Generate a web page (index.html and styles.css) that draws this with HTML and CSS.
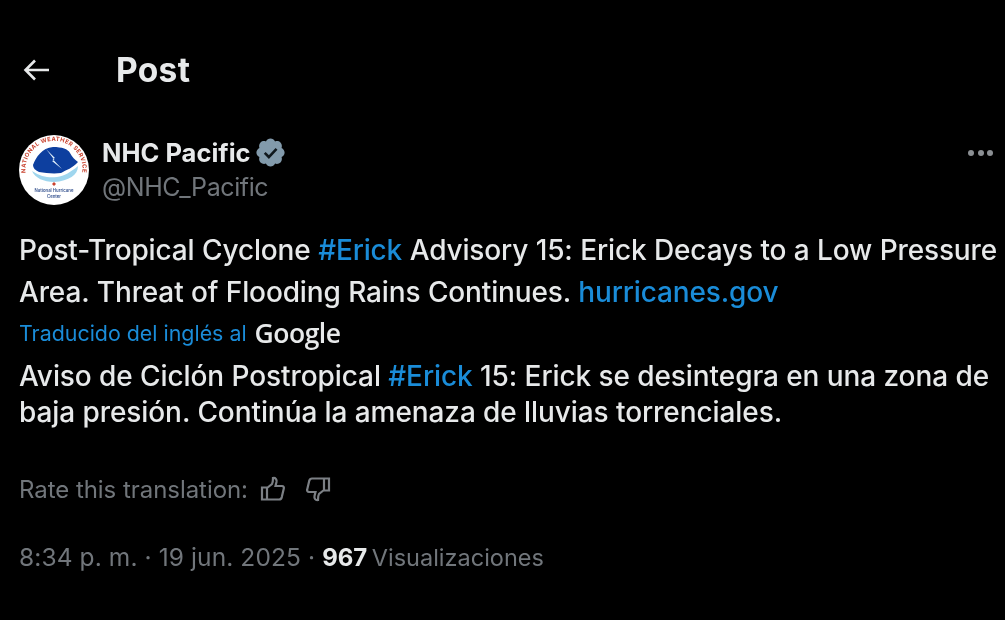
FILE: index.html
```html
<!DOCTYPE html>
<html lang="es">
<head>
<meta charset="utf-8">
<title>Post</title>
<link rel="stylesheet" href="styles.css">
</head>
<body>
<main class="page">
  <header class="topbar">
    <svg class="back" viewBox="0 0 28 24" aria-hidden="true"><path d="M3.500 12H27M13 2.500L3.500 12l9.500 9.500" fill="none" stroke="#e7e9ea" stroke-width="2.600"/></svg>
    <h1 class="title">Post</h1>
  </header>
  <section class="author">
    <svg class="avatar" viewBox="0 0 70 70" role="img" aria-label="NWS">
      <circle cx="35" cy="35" r="35" fill="#fff"/>
      <defs><path id="ring" d="M9 46A28.500 28.500 0 1 1 61 46"/></defs>
      <text class="ring-text"><textPath href="#ring" startOffset="50%" text-anchor="middle">NATIONAL WEATHER SERVICE</textPath></text>
      <path d="M13 36C22 42 30 43 38 42C45 41 52 37 59 31C59 40 50 46 35 47C25 47 16 43 13 36Z" fill="#9fd6ee"/>
      <path d="M14 30C17 22 23 13 34 12C43 12 49 14 51 18C53 22 56 25 59 27C54 33 47 35 42 38C34 39 27 38 20 37C16 35 14 33 14 30Z" fill="#0d3f9f"/>
      <path d="M27 14L36 23L33.500 24L43 34L33 26L35.500 25Z" fill="#e6f4fc"/>
      <path d="M33 49l2-2 2 2-2 2z" fill="#c9432f"/>
      <text class="center-text" x="35" y="57" text-anchor="middle">National Hurricane</text>
      <text class="center-text" x="35" y="63" text-anchor="middle">Center</text>
    </svg>
    <div class="names">
      <div class="display">
        <span class="display-name">NHC Pacific</span>
        <svg class="badge" viewBox="0 0 24 24" aria-hidden="true"><path d="M22.250 12c0-1.430-.880-2.670-2.190-3.340.460-1.390.200-2.900-.810-3.910s-2.520-1.270-3.910-.810c-.660-1.310-1.910-2.190-3.340-2.190s-2.670.880-3.330 2.190c-1.400-.460-2.910-.200-3.920.810s-1.260 2.520-.800 3.910c-1.310.670-2.200 1.910-2.200 3.340s.890 2.670 2.200 3.340c-.460 1.390-.210 2.900.800 3.910s2.520 1.260 3.910.810c.670 1.310 1.910 2.190 3.340 2.190s2.680-.880 3.340-2.190c1.390.450 2.900.200 3.910-.810s1.270-2.520.810-3.910c1.310-.670 2.190-1.910 2.190-3.340z" fill="#829aab"/><path d="M7.800 12.300l3 3 5.600-6" fill="none" stroke="#10181d" stroke-width="1.900"/></svg>
      </div>
      <div class="handle">@NHC_Pacific</div>
    </div>
    <div class="more" aria-label="Más"><span></span><span></span><span></span></div>
  </section>
  <p class="tweet">Post-Tropical Cyclone <a>#Erick</a> Advisory 15: Erick Decays to a Low Pressure Area. Threat of Flooding Rains Continues. <a>hurricanes.gov</a></p>
  <div class="translated-by"><span>Traducido del inglés al</span><span class="google">Google</span></div>
  <p class="translation">Aviso de Ciclón Postropical <a>#Erick</a> 15: Erick se desintegra en una zona de baja presión. Continúa la amenaza de lluvias torrenciales.</p>
  <div class="rate">
    <span>Rate this translation:</span>
    <svg class="thumb" viewBox="0 0 26 26" aria-hidden="true"><path d="M2 11.500h5v12H2zM7 12l5-4c1-1.500 1-3.500 1-6 2.500-.500 4 1.500 3.500 4L15.500 10H22c1.500 0 2.200 1.200 1.800 2.600l-2 8.500c-.400 1.500-1.300 2.400-2.800 2.400H7" fill="none" stroke="#7c8085" stroke-width="2.200"/></svg>
    <svg class="thumb down" viewBox="0 0 26 26" aria-hidden="true"><path d="M2 11.500h5v12H2zM7 12l5-4c1-1.500 1-3.500 1-6 2.500-.500 4 1.500 3.500 4L15.500 10H22c1.500 0 2.200 1.200 1.800 2.600l-2 8.500c-.400 1.500-1.300 2.400-2.800 2.400H7" fill="none" stroke="#7c8085" stroke-width="2.200"/></svg>
  </div>
  <div class="meta"><span class="date">8:34 p. m. · 19 jun. 2025 · </span><strong>967</strong> <span class="views">Visualizaciones</span></div>
</main>
</body>
</html>
```
FILE: styles.css
```css
* { box-sizing: border-box; }
html, body { margin: 0; height: 100%; background: #000; }
body { overflow: hidden; }
.page {
  height: 620px;
  padding: 0 3px 0 19px;
  font-family: Inter, "Liberation Sans", sans-serif;
  color: #e7e9ea;
  filter: blur(0.5px);
}
.topbar { display: flex; align-items: center; height: 70px; padding-top: 70px; gap: 66px; padding-left: 3px; }
.back { width: 28px; height: 24px; flex: none; }
.title { margin: 0; font-size: 33.500px; font-weight: 700; letter-spacing: 0.3px; }
.author { display: flex; align-items: flex-start; margin-top: 65px; height: 70px; }
.avatar { width: 70px; height: 70px; flex: none; }
.ring-text { font-size: 5.800px; font-weight: 700; fill: #c9432f; letter-spacing: .4px; }
.center-text { font-size: 4.300px; font-weight: 600; fill: #36538f; }
.names { margin-left: 13px; flex: 1; }
.display { display: flex; align-items: center; gap: 3px; height: 35px; }
.display-name { font-size: 25.500px; font-weight: 700; }
.badge { width: 33px; height: 33px; flex: none; }
.handle { color: #71767b; font-size: 25px; line-height: 35px; letter-spacing: -0.4px; }
.more { display: flex; gap: 3.500px; padding-top: 15px; margin-right: 9px; }
.more span { width: 6px; height: 6px; border-radius: 50%; background: #8b8f93; }
.tweet { margin: 24px 0 0; font-size: 28px; line-height: 42px; font-weight: 450; letter-spacing: -0.14px; word-spacing: 0.2px; }
a { color: #1a8cd8; }
.translated-by { display: flex; align-items: center; gap: 8px; height: 39px; font-size: 21.400px; color: #1a8cd8; }
.google { color: #e7e9ea; font-size: 26.500px; font-weight: 600; font-family: "Open Sans", sans-serif; letter-spacing: -0.5px; }
.translation { margin: 6px 0 0; font-size: 28px; line-height: 36px; font-weight: 450; letter-spacing: -0.08px; }
.rate { display: flex; align-items: center; gap: 12px; margin-top: 41px; height: 36px; font-size: 24px; color: #71767b; letter-spacing: -0.05px; }
.thumb { width: 26px; height: 26px; flex: none; }
.down { transform: rotate(180deg); margin-left: 7px; }
.meta { margin-top: 35px; color: #71767b; white-space: pre-wrap; }
.date { font-size: 24.500px; letter-spacing: 0.1px; }
.meta strong { font-size: 24px; color: #e7e9ea; font-weight: 700; }
.views { font-size: 23.500px; }
```
